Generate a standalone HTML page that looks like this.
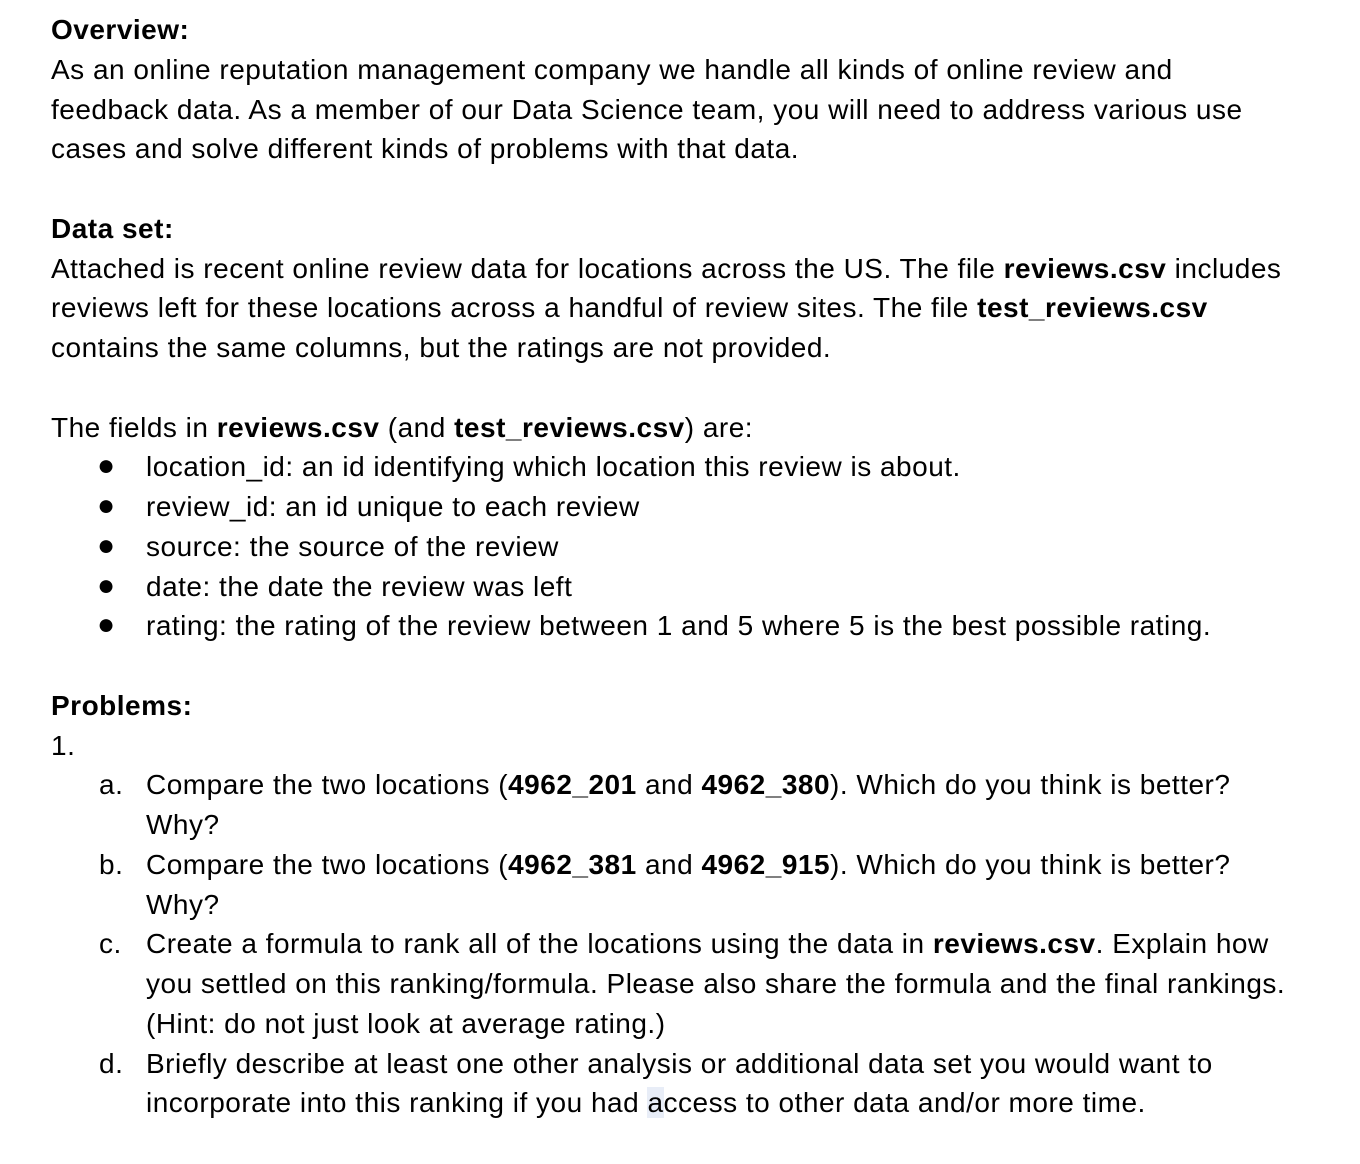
<!DOCTYPE html>
<html><head><meta charset="utf-8"><style>
body{margin:0;background:#fff;width:1360px;height:1164px;overflow:hidden}
.p{position:absolute;left:0;top:10px;font-family:"Liberation Sans",Arial,sans-serif;font-size:28px;letter-spacing:0.5px;line-height:39.75px;color:#000;white-space:nowrap}
.l{position:relative;height:39.75px;padding-left:51px}
.i{padding-left:146px}
.m{position:absolute;left:99px}
.bu{position:absolute;left:97px;font-size:30px;top:-1px}
b{font-weight:bold}
</style></head><body><div class="p">
<div class="l"><b>Overview:</b></div>
<div class="l">As an online reputation management company we handle all kinds of online review and</div>
<div class="l">feedback data. As a member of our Data Science team, you will need to address various use</div>
<div class="l">cases and solve different kinds of problems with that data.</div>
<div class="l"></div>
<div class="l"><b>Data set:</b></div>
<div class="l">Attached is recent online review data for locations across the US. The file <b>reviews.csv</b> includes</div>
<div class="l">reviews left for these locations across a handful of review sites. The file <b>test_reviews.csv</b></div>
<div class="l">contains the same columns, but the ratings are not provided.</div>
<div class="l"></div>
<div class="l">The fields in <b>reviews.csv</b> (and <b>test_reviews.csv</b>) are:</div>
<div class="l i"><span class="bu">●</span>location_id: an id identifying which location this review is about.</div>
<div class="l i"><span class="bu">●</span>review_id: an id unique to each review</div>
<div class="l i"><span class="bu">●</span>source: the source of the review</div>
<div class="l i"><span class="bu">●</span>date: the date the review was left</div>
<div class="l i"><span class="bu">●</span>rating: the rating of the review between 1 and 5 where 5 is the best possible rating.</div>
<div class="l"></div>
<div class="l"><b>Problems:</b></div>
<div class="l">1.</div>
<div class="l i"><span class="m">a.</span>Compare the two locations (<b>4962_201</b> and <b>4962_380</b>). Which do you think is better?</div>
<div class="l i">Why?</div>
<div class="l i"><span class="m">b.</span>Compare the two locations (<b>4962_381</b> and <b>4962_915</b>). Which do you think is better?</div>
<div class="l i">Why?</div>
<div class="l i"><span class="m">c.</span>Create a formula to rank all of the locations using the data in <b>reviews.csv</b>. Explain how</div>
<div class="l i">you settled on this ranking/formula. Please also share the formula and the final rankings.</div>
<div class="l i">(Hint: do not just look at average rating.)</div>
<div class="l i"><span class="m">d.</span>Briefly describe at least one other analysis or additional data set you would want to</div>
<div class="l i">incorporate into this ranking if you had <span style="background:#e8edf7">a</span>ccess to other data and/or more time.</div>
</div></body></html>
